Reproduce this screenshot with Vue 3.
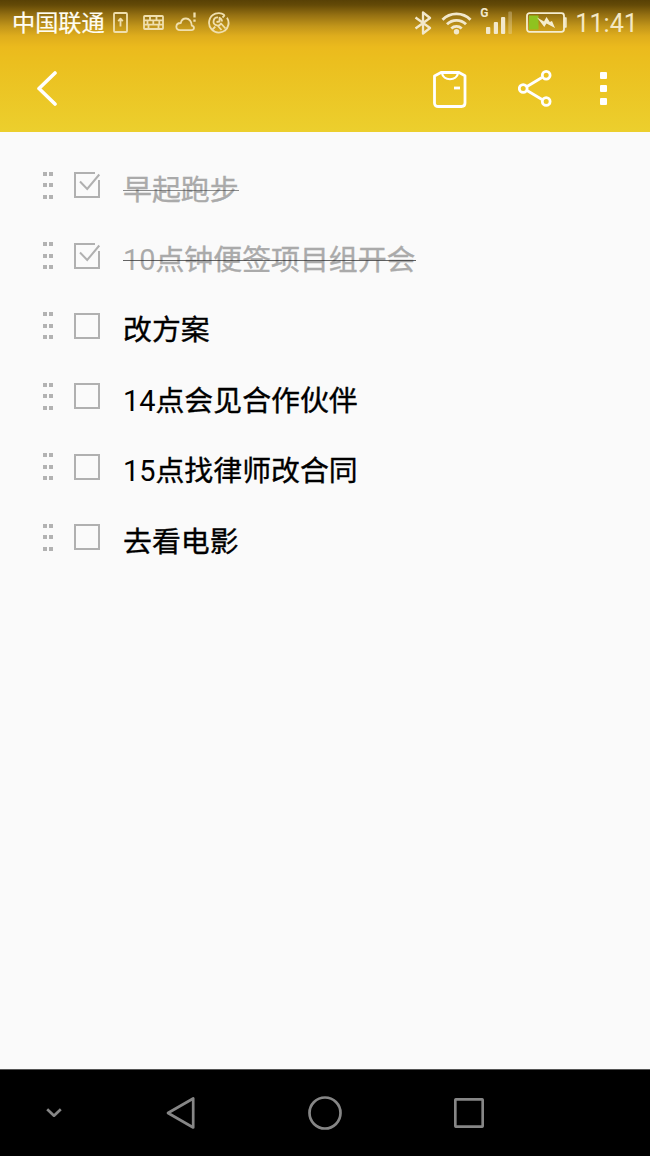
<template>
  <div class="phone">
    <header class="top">
      <!-- 状态栏 -->
      <div class="status-bar">
        <div class="status-left">
          <span class="carrier">中国联通</span>
          <svg class="i-upload" width="15" height="21" viewBox="0 0 15 21">
            <rect x="1" y="1" width="13" height="19" rx="1" />
            <path d="M7.5 14.5V7M5.2 9.2L7.5 6.7l2.3 2.5" />
          </svg>
          <svg class="i-keyboard" width="21" height="15" viewBox="0 0 21 15">
            <rect x="1" y="1" width="19" height="13" rx="0.8" />
            <path d="M1 5.3h19M1 9.7h19M7 1v4.3M13.5 1v4.3M4.5 5.3v4.4M10.3 5.3v4.4M16.3 5.3v4.4M5.5 9.7V14M15.5 9.7V14" />
          </svg>
          <svg class="i-cloud" width="22" height="20" viewBox="0 0 22 20">
            <path d="M5 18.200h11.500c2.800 0 3.600-3.800 0.300-4.600C16.600 9.300 14 6.500 11 6.500c-2.800 0-4.700 1.800-5.200 4.500C0 11 0 18.200 5 18.200z" />
            <path class="mark" d="M19.500 0.500v5M19.500 7.500v2.300" />
          </svg>
          <svg class="i-tool" width="22" height="22" viewBox="0 0 22 22">
            <path d="M16.500 3A9.700 9.700 0 1 0 19 5.700M19 5.700A9.700 9.700 0 0 1 16.500 19M14.500 5.500l2.300-2.300M4 18l3.300-3.300" />
            <path d="M10 5.500a4 4 0 1 0 3 6l4.500 5M14 9.500a4 4 0 0 0-2.500-3.700v3.700l-3 0.500M9.500 13.500l4 4.500" />
          </svg>
        </div>
        <div class="status-right">
          <svg class="i-bluetooth" width="18" height="24" viewBox="0 0 18 24">
            <path d="M1.500 6.500L16 17l-7 5.500v-21L16 7 1.500 17.500" />
          </svg>
          <svg class="i-wifi" width="31" height="24" viewBox="0 0 31 24">
            <path d="M1.500 8.800a19.500 19.500 0 0 1 28 0M6 13.300a13.500 13.500 0 0 1 19 0M10.300 17.400a7.600 7.600 0 0 1 10.400 0" />
            <circle cx="15.500" cy="20.700" r="2.700" />
          </svg>
          <div class="signal">
            <span class="network">G</span>
            <svg width="32" height="26" viewBox="0 0 32 26">
              <rect x="6" y="19" width="4.300" height="7" rx="1" />
              <rect x="13.800" y="14" width="4.200" height="12" rx="1" />
              <rect x="21" y="9" width="4.200" height="17" rx="1" />
              <rect x="28.300" y="3.500" width="3.700" height="22.500" rx="1" opacity="0.3" />
            </svg>
          </div>
          <svg class="i-battery" width="41" height="21" viewBox="0 0 41 21">
            <rect class="charge" x="3" y="3.500" width="9.500" height="14" />
            <rect class="shell" x="1" y="1.200" width="37" height="18.600" rx="2.500" />
            <path class="pin" d="M38.500 6H40v9h-1.500z" />
            <path class="bolt" d="M11 5.500l7 4L20.500 5l3.300 5 2.200-1 3 7-8.500-4.500L18.300 15z" />
          </svg>
          <span class="time">11:41</span>
        </div>
      </div>
      <!-- 操作栏 -->
      <div class="toolbar">
        <svg class="back" width="22" height="36" viewBox="0 0 22 36">
          <path d="M19 3L3 18.500 19 34" />
        </svg>
        <div class="actions">
          <svg class="skin" width="34" height="37" viewBox="0 0 34 37">
            <path d="M8 1.500h18l6 3.200v27.300q0 3.500-3.500 3.500h-23Q1.500 35.500 1.500 32V5z" />
            <path class="thin" d="M9 2c1 8.300 15 8.300 16 0" />
            <path d="M21 17h6" />
          </svg>
          <svg class="share" width="34" height="37" viewBox="0 0 34 37">
            <path d="M9 16.500l15-9M9 20.500l15 9" />
            <circle cx="5.200" cy="18.500" r="3.900" />
            <circle cx="28.200" cy="5.300" r="3.900" />
            <circle cx="28.200" cy="31.500" r="3.900" />
          </svg>
          <div class="more"><i v-for="n in 3" :key="n"></i></div>
        </div>
      </div>
    </header>

    <!-- 待办列表 -->
    <ul class="list">
      <li v-for="item in items" :key="item.id" :class="{ done: item.done }" @click="toggle(item)">
        <div class="handle"><i v-for="n in 6" :key="n"></i></div>
        <svg class="checkbox" width="28" height="28" viewBox="0 0 28 28">
          <template v-if="item.done">
            <path d="M22 2H2v24h24V9" />
            <path d="M7 10.500l7.200 7.500L26.300 3.500" />
          </template>
          <rect v-else x="2" y="2" width="24" height="24" />
        </svg>
        <span class="text"><span v-if="item.hour" class="hour">{{ item.hour }}</span>{{ item.text }}</span>
      </li>
    </ul>

    <!-- 底部导航 -->
    <footer class="nav">
      <svg width="18" height="12" viewBox="0 0 18 12">
        <path d="M2.200 2.200L9 8.700l6.800-6.500" />
      </svg>
      <svg width="30" height="34" viewBox="0 0 30 34">
        <path d="M27.200 2.500v29L2 17z" />
      </svg>
      <svg width="34" height="34" viewBox="0 0 34 34">
        <circle cx="17" cy="17" r="15.500" />
      </svg>
      <svg width="30" height="30" viewBox="0 0 30 30">
        <rect x="1.300" y="1.300" width="27.400" height="27.400" rx="1" />
      </svg>
    </footer>
  </div>
</template>

<script setup>
import { reactive } from 'vue'

const items = reactive([
  { id: 1, text: '早起跑步', done: true },
  { id: 2, hour: 10, text: '点钟便签项目组开会', done: true },
  { id: 3, text: '改方案', done: false },
  { id: 4, hour: 14, text: '点会见合作伙伴', done: false },
  { id: 5, hour: 15, text: '点找律师改合同', done: false },
  { id: 6, text: '去看电影', done: false }
])

const toggle = (item) => {
  item.done = !item.done
}
</script>

<style>
body {
  margin: 0;
  background: #fafafa;
}
</style>

<style scoped>
.phone {
  display: flex;
  flex-direction: column;
  width: 650px;
  height: 1156px;
  overflow: hidden;
  background: #fafafa;
  font-family: Roboto, "Noto Sans CJK SC", sans-serif;
}

svg {
  display: block;
  flex: none;
  fill: none;
  stroke-linejoin: round;
}

.top {
  height: 132px;
  background: linear-gradient(#584105 0, #644a07 5px, #957012 15px, #c1951a 26px, #dfad1d 36px, #ebba1d 47px, #ebbe1e 58px, #eccf2d 132px);
}

.status-bar {
  display: flex;
  justify-content: space-between;
  height: 45px;
  padding: 0 13px 0 12px;
}

.status-left,
.status-right {
  display: flex;
  align-items: center;
}

.status-left svg {
  stroke: #f0dfad;
  stroke-width: 1.8;
}

.carrier {
  margin-top: 2px;
  color: #fffdf2;
  font-size: 23.2px;
  line-height: 45px;
  -webkit-text-stroke: 0.2px #fffdf2;
}

.i-upload {
  margin-left: 8px;
}

.i-keyboard {
  margin-left: 15px;
}

.i-cloud {
  margin-left: 11px;
  margin-top: -2px;
}

.i-cloud .mark {
  stroke-width: 2.3;
}

.i-tool {
  margin-left: 11px;
}

.i-bluetooth {
  stroke: #f2e8cc;
  stroke-width: 2.3;
}

.i-wifi {
  margin-left: 9px;
  stroke: #f2e8cc;
  stroke-width: 2.8;
}

.i-wifi circle {
  fill: #f2e8cc;
  stroke: none;
}

.signal {
  position: relative;
  margin-left: 8px;
  margin-top: -4px;
}

.signal svg {
  fill: #f2e8cc;
}

.network {
  position: absolute;
  left: 0;
  top: 0;
  color: #f2e8cc;
  font-size: 12px;
  font-weight: 700;
  line-height: 10px;
}

.i-battery {
  margin-left: 14px;
}

.charge {
  fill: #8fc31f;
}

.shell {
  stroke: #f5edcf;
  stroke-width: 1.8;
}

.pin {
  stroke: #f5edcf;
  stroke-width: 1.4;
}

.bolt {
  fill: #f5edcf;
}

.time {
  margin-left: 8px;
  margin-top: 2px;
  margin-right: -1px;
  color: #f4e8c4;
  font-size: 25.2px;
  line-height: 45px;
}

.toolbar {
  display: flex;
  justify-content: space-between;
  align-items: center;
  height: 87px;
  padding: 0 43px 0 36px;
}

.toolbar svg {
  stroke: #fff;
  stroke-width: 2.8;
}

.toolbar .back {
  margin-top: -2px;
  stroke-width: 3.6;
  stroke-linecap: round;
}

.toolbar .thin {
  stroke-width: 2.2;
}

.actions {
  display: flex;
  align-items: center;
}

.skin {
  margin-top: 2px;
}

.share {
  margin-left: 51px;
}

.more {
  display: grid;
  gap: 6px;
  margin-left: 48px;
}

.more i {
  width: 7px;
  height: 7px;
  border-radius: 1px;
  background: #fff;
}

.list {
  flex: 1;
  margin: 0;
  padding: 18px 42px 0 43px;
  list-style: none;
}

.list li {
  display: flex;
  align-items: center;
  height: 70.4px;
  cursor: pointer;
}

.handle {
  display: grid;
  grid-template-columns: 4px 4px;
  gap: 7.5px 1.5px;
}

.handle i {
  height: 4px;
  background: #b2b2b2;
}

.checkbox {
  margin-left: 20.5px;
  stroke: #b0b0b0;
  stroke-width: 2;
  stroke-linejoin: miter;
}

.text {
  position: relative;
  margin-left: 22px;
  margin-top: 9px;
  color: #000;
  font-size: 28.9px;
  line-height: 40px;
  white-space: nowrap;
  -webkit-text-stroke: 0.35px currentColor;
}

.hour {
  -webkit-text-stroke: 0;
}

.done .text {
  color: #aaa;
}

.done .text::after {
  content: '';
  position: absolute;
  left: 0;
  right: 0;
  top: 20px;
  height: 1px;
  background: rgba(50, 50, 50, 0.75);
}

.done:first-child .text::after {
  background: rgba(80, 80, 80, 0.65);
}

.nav {
  display: flex;
  align-items: center;
  height: 86px;
  padding-left: 45px;
  border-top: 1px solid #555;
  background: #000;
}

.nav svg {
  stroke: #868686;
  stroke-width: 2.7;
}

.nav svg:nth-child(2) {
  margin-left: 103px;
}

.nav svg:nth-child(3) {
  margin-left: 112px;
}

.nav svg:nth-child(4) {
  margin-left: 112px;
}
</style>
